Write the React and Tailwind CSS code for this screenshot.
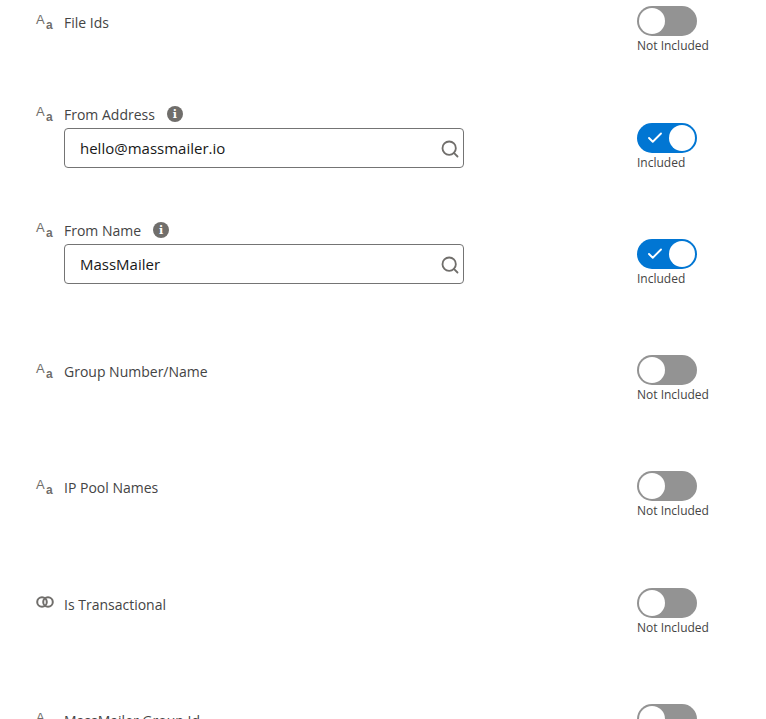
import { Search, Check } from "lucide-react";

const FONT = "font-['Open_Sans','Noto_Sans',sans-serif]";

const ROWS = [
  { label: "File Ids", height: "h-[100px]" },
  { label: "From Address", value: "hello@massmailer.io", infoGap: "ml-[12px]", included: true, height: "h-[116px]" },
  { label: "From Name", value: "MassMailer", infoGap: "ml-[12px]", included: true, height: "h-[133px]" },
  { label: "Group Number/Name", height: "h-[116px]" },
  { label: "IP Pool Names", height: "h-[117px]" },
  { label: "Is Transactional", type: "boolean", height: "h-[116px]" },
  { label: "MassMailer Group Id", height: "h-[116px]" },
];

function TextIcon() {
  return (
    <span className="relative block w-[18px] h-[16px] text-[#706e6b] font-['Liberation_Sans',sans-serif]">
      <span className="absolute left-0 top-[-2px] text-[13px] leading-[16px]">A</span>
      <span className="absolute left-[10px] top-[3px] text-[12px] font-bold leading-[16px]">a</span>
    </span>
  );
}

function BooleanIcon() {
  return (
    <svg width="18" height="12" viewBox="0 0 18 12" fill="none" stroke="#706e6b" strokeWidth="2">
      <circle cx="6" cy="6" r="4.8" />
      <circle cx="12" cy="6" r="4.8" />
    </svg>
  );
}

function InfoIcon() {
  return (
    <span className="w-4 h-4 rounded-full bg-[#706e6b] flex items-center justify-center text-white text-[11px] font-bold leading-none font-['DejaVu_Serif',serif]">
      i
    </span>
  );
}

function Toggle({ included }) {
  return (
    <div className="w-[72px]">
      <div
        className={`w-[60px] h-[30px] rounded-full flex items-center px-[2px] ${
          included ? "bg-[#0176d3] justify-between" : "bg-[#939393]"
        }`}
      >
        {included && <Check size={18} strokeWidth={2.5} className="text-white ml-[7px]" />}
        <span className="w-[26px] h-[26px] rounded-full bg-white" />
      </div>
      <div className="text-[12px] leading-[18px] text-[#444444] whitespace-nowrap mt-[1px]">
        {included ? "Included" : "Not Included"}
      </div>
    </div>
  );
}

function FieldRow({ row }) {
  const hasInput = !!row.value;
  return (
    <div className={`flex pl-[36px] ${row.height}`}>
      <div className={`w-[601px] flex ${hasInput ? "pt-[4px]" : "pt-[12px]"}`}>
        <div className="w-[28px] pt-[2px] shrink-0">
          {row.type === "boolean" ? <BooleanIcon /> : <TextIcon />}
        </div>
        <div>
          <div className="flex items-center h-[20px] text-[14px] text-[#444444]">
            {row.label}
            {hasInput && (
              <span className={row.infoGap}>
                <InfoIcon />
              </span>
            )}
          </div>
          {hasInput && (
            <div className="relative w-[400px] h-[40px] mt-[4px]">
              <input
                readOnly
                value={row.value}
                className="w-full h-full border border-[#747474] rounded-[4px] pl-[15px] pr-10 text-[15px] text-[#181818] bg-white outline-none"
              />
              <Search size={20} strokeWidth={2.2} className="absolute right-[2px] mr-[2px] top-[11px] text-[#706e6b]" />
            </div>
          )}
        </div>
      </div>
      <div className={hasInput ? "pt-[23px]" : "pt-[6px]"}>
        <Toggle included={row.included} />
      </div>
    </div>
  );
}

export default function App() {
  return (
    <div className={`w-[766px] h-[719px] overflow-hidden bg-white ${FONT}`}>
      {ROWS.map((row) => (
        <FieldRow key={row.label} row={row} />
      ))}
    </div>
  );
}
